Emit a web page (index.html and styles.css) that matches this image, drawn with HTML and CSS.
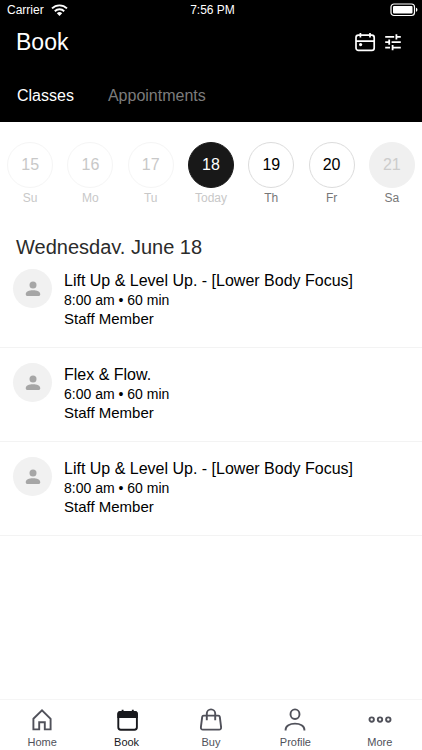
FILE: index.html
```html
<!DOCTYPE html>
<html lang="en">
  <head>
    <meta charset="UTF-8" />
    <meta name="viewport" content="width=device-width, initial-scale=1.0" />
    <title>Book</title>
    <link rel="stylesheet" href="styles.css">
  </head>
  <body>
    <svg class="sprite" aria-hidden="true">
      <symbol id="person" viewBox="0 0 16 16">
        <circle cx="8" cy="4" r="3.5" />
        <path d="M.7 15v-1.7C.7 10.6 4 9.2 8 9.2s7.3 1.4 7.3 4.1q0 1.7-1.4 1.7H2.1Q.7 15 .7 13.3z" />
      </symbol>
    </svg>

    <header class="header">
      <div class="status-bar">
        <span class="carrier">
          Carrier
          <svg width="17" height="12" viewBox="0 0 17 12" fill="none" stroke="#fff" stroke-width="1.9">
            <path d="M1 4.4a10.7 10.7 0 0 1 15 0M3.8 7.2a6.7 6.7 0 0 1 9.4 0" />
            <path d="M5.8 9.2a3.9 3.9 0 0 1 5.4 0L8.5 12z" fill="#fff" stroke="none" />
          </svg>
        </span>
        <span>7:56 PM</span>
        <span class="battery">
          <svg width="28" height="14" viewBox="0 0 28 14" fill="none">
            <rect x="1" y="1" width="23.5" height="11.5" rx="3" stroke="#fff" stroke-width="1.2" />
            <rect x="3" y="3" width="19.5" height="7.5" rx="1" fill="#fff" />
            <path d="M26 4.8v4c1.9-.5 1.9-3.5 0-4z" fill="#fff" />
          </svg>
        </span>
      </div>

      <div class="title-bar">
        <h1>Book</h1>
        <div class="actions">
          <button type="button" aria-label="Choose date">
            <svg width="22" height="20" viewBox="0 0 22 20" fill="none" stroke="#fff" stroke-width="1.7">
              <rect x="2" y="3.2" width="18.2" height="15.2" rx="2.4" />
              <path d="M2 9.2h18.2M6.4 1v4.4M16 1v4.4" />
              <circle cx="6.6" cy="12.6" r="1.6" fill="#fff" stroke="none" />
            </svg>
          </button>
          <button type="button" aria-label="Filter">
            <svg width="18" height="20" viewBox="0 0 18 20" fill="none" stroke="#fff" stroke-width="1.8">
              <path d="M1.2 4.8h9M12.4 2.2v5.2M12.6 4.8h4.2M1.2 10.2h3.4M5.2 7.6v5.2M7.6 10.2h9.2M1.2 15.6h4.8M8.6 13v5.2M8.8 15.6h8" />
            </svg>
          </button>
        </div>
      </div>

      <nav class="tabs">
        <a href="#classes" class="active">Classes</a>
        <a href="#appointments">Appointments</a>
      </nav>
    </header>

    <main>
      <!-- Week picker -->
      <div class="week">
        <button type="button" class="day past"><span class="number">15</span>Su</button>
        <button type="button" class="day past"><span class="number">16</span>Mo</button>
        <button type="button" class="day past"><span class="number">17</span>Tu</button>
        <button type="button" class="day today"><span class="number">18</span>Today</button>
        <button type="button" class="day"><span class="number">19</span>Th</button>
        <button type="button" class="day"><span class="number">20</span>Fr</button>
        <button type="button" class="day closed"><span class="number">21</span>Sa</button>
      </div>

      <h2 class="date-title">Wednesday, June 18</h2>

      <ul class="class-list">
        <li class="class-item">
          <span class="avatar"><svg width="16" height="16"><use href="#person" /></svg></span>
          <div>
            <h3>Lift Up &amp; Level Up. - [Lower Body Focus]</h3>
            <p class="time">8:00 am • 60 min</p>
            <p class="staff">Staff Member</p>
          </div>
        </li>
        <li class="class-item">
          <span class="avatar"><svg width="16" height="16"><use href="#person" /></svg></span>
          <div>
            <h3>Flex &amp; Flow.</h3>
            <p class="time">6:00 am • 60 min</p>
            <p class="staff">Staff Member</p>
          </div>
        </li>
        <li class="class-item">
          <span class="avatar"><svg width="16" height="16"><use href="#person" /></svg></span>
          <div>
            <h3>Lift Up &amp; Level Up. - [Lower Body Focus]</h3>
            <p class="time">8:00 am • 60 min</p>
            <p class="staff">Staff Member</p>
          </div>
        </li>
      </ul>
    </main>

    <!-- Bottom navigation -->
    <nav class="bottom-nav">
      <a href="#home">
        <svg width="24" height="24" viewBox="0 0 24 24">
          <path d="M3.4 10.8 12 2.4l8.6 8.4V21.4h-5.8v-7.2H9.2v7.2H3.4z" />
        </svg>
        Home
      </a>
      <a href="#book" class="active">
        <svg width="24" height="24" viewBox="0 0 24 24">
          <rect x="3.3" y="3.9" width="18.6" height="17.8" rx="2.4" />
          <path d="M3.3 9V6.2q0-2.3 2.3-2.3h14q2.3 0 2.3 2.3V9zM7.6 1.8V5M17.8 1.8V5" fill="currentColor" />
        </svg>
        Book
      </a>
      <a href="#buy">
        <svg width="24" height="24" viewBox="0 0 24 24">
          <path d="M4.6 7.6h14.8q1.2 0 1.4 1.2l1.3 10.4q.2 2.4-2 2.4H3.9q-2.2 0-2-2.4L3.2 8.8q.2-1.2 1.4-1.2z" />
          <path d="M7.8 12.2V5.6a4.2 4.2 0 0 1 8.4 0v6.6" />
        </svg>
        Buy
      </a>
      <a href="#profile">
        <svg width="24" height="24" viewBox="0 0 24 24">
          <ellipse cx="12" cy="6.2" rx="4.5" ry="4.8" />
          <path d="M2.6 22.6v-.8c0-3.9 4.2-6.2 9.4-6.2s9.4 2.3 9.4 6.2v.8" />
        </svg>
        Profile
      </a>
      <a href="#more">
        <svg width="24" height="24" viewBox="0 0 24 24">
          <circle cx="3.7" cy="11.6" r="2.2" />
          <circle cx="12" cy="11.6" r="2.2" />
          <circle cx="20.3" cy="11.6" r="2.2" />
        </svg>
        More
      </a>
    </nav>
  </body>
</html>
```

FILE: styles.css
```css
* {
  box-sizing: border-box;
}
body {
  display: flex;
  flex-direction: column;
  min-height: 100vh;
  margin: 0;
  background-color: #fff;
  color: #000;
  font-family: "Liberation Sans", Arial, sans-serif;
}
h1,
h2,
h3,
p,
ul {
  margin: 0;
  padding: 0;
  font-weight: normal;
}
button {
  padding: 0;
  border: 0;
  background: none;
  font-family: inherit;
}
a {
  text-decoration: none;
}
svg {
  display: block;
}
.sprite {
  display: none;
}
main {
  flex: 1;
}

/* Header */
.header {
  background-color: #000;
  color: #fff;
}
.status-bar {
  display: grid;
  grid-template-columns: 1fr auto 1fr;
  height: 20px;
  padding: 0 4px 0 7px;
  font-size: 12px;
  line-height: 20px;
}
.carrier {
  display: flex;
  align-items: center;
  gap: 7px;
}
.battery {
  display: flex;
  align-items: center;
  justify-content: flex-end;
}
.title-bar {
  display: flex;
  align-items: center;
  justify-content: space-between;
  height: 44px;
  padding: 0 20px 0 16px;
}
.title-bar h1 {
  font-size: 23px;
}
.actions {
  display: flex;
  gap: 8px;
}
.tabs {
  display: flex;
  gap: 34px;
  padding: 20px 17px 14px;
}
.tabs a {
  color: #7c7c7c;
  font-size: 16px;
  line-height: 24px;
}
.tabs a.active {
  color: #fff;
}

/* Week picker */
.week {
  display: grid;
  grid-template-columns: repeat(7, 1fr);
  padding-top: 20px;
}
.day {
  display: flex;
  flex-direction: column;
  align-items: center;
  gap: 2px;
  color: #777;
  font-size: 12px;
  line-height: 16px;
}
.number {
  display: flex;
  align-items: center;
  justify-content: center;
  width: 46px;
  height: 46px;
  border: 1px solid #dcdcdc;
  border-radius: 50%;
  color: #000;
  font-size: 16px;
}
.past,
.today {
  color: #c8c8c8;
}
.past .number {
  border-color: #f5f5f5;
  color: #c8c8c8;
}
.today .number {
  border-color: #181818;
  background-color: #181818;
  color: #fff;
}
.closed .number {
  border-color: #f0f0f0;
  background-color: #f0f0f0;
  color: #ccc;
}

/* Class list */
.date-title {
  height: 19px;
  margin-top: 29px;
  padding: 0 16px;
  overflow: hidden;
  color: #2b2b2b;
  font-size: 20px;
  line-height: 24px;
}
.class-list {
  list-style: none;
}
.class-item {
  display: flex;
  gap: 12px;
  padding: 15px 13px 18px;
  border-bottom: 1px solid #f3f3f3;
}
.class-item div {
  padding-top: 2px;
}
.avatar {
  display: flex;
  align-items: center;
  justify-content: center;
  width: 39px;
  height: 39px;
  border-radius: 50%;
  background-color: #f1f1f1;
  fill: #a6a6a6;
}
.class-item h3 {
  font-size: 16px;
  line-height: 20px;
}
.time {
  font-size: 14px;
  line-height: 18px;
}
.staff {
  font-size: 15px;
  line-height: 20px;
}

/* Bottom navigation */
.bottom-nav {
  display: grid;
  grid-template-columns: repeat(5, 1fr);
  padding-top: 8px;
  border-top: 1px solid #f5f5f5;
}
.bottom-nav a {
  display: flex;
  flex-direction: column;
  align-items: center;
  gap: 3px;
  color: #50515a;
  font-size: 11px;
  line-height: 15px;
}
.bottom-nav a.active {
  color: #18191d;
}
.bottom-nav svg {
  fill: none;
  stroke: currentColor;
  stroke-width: 1.9;
}
```
